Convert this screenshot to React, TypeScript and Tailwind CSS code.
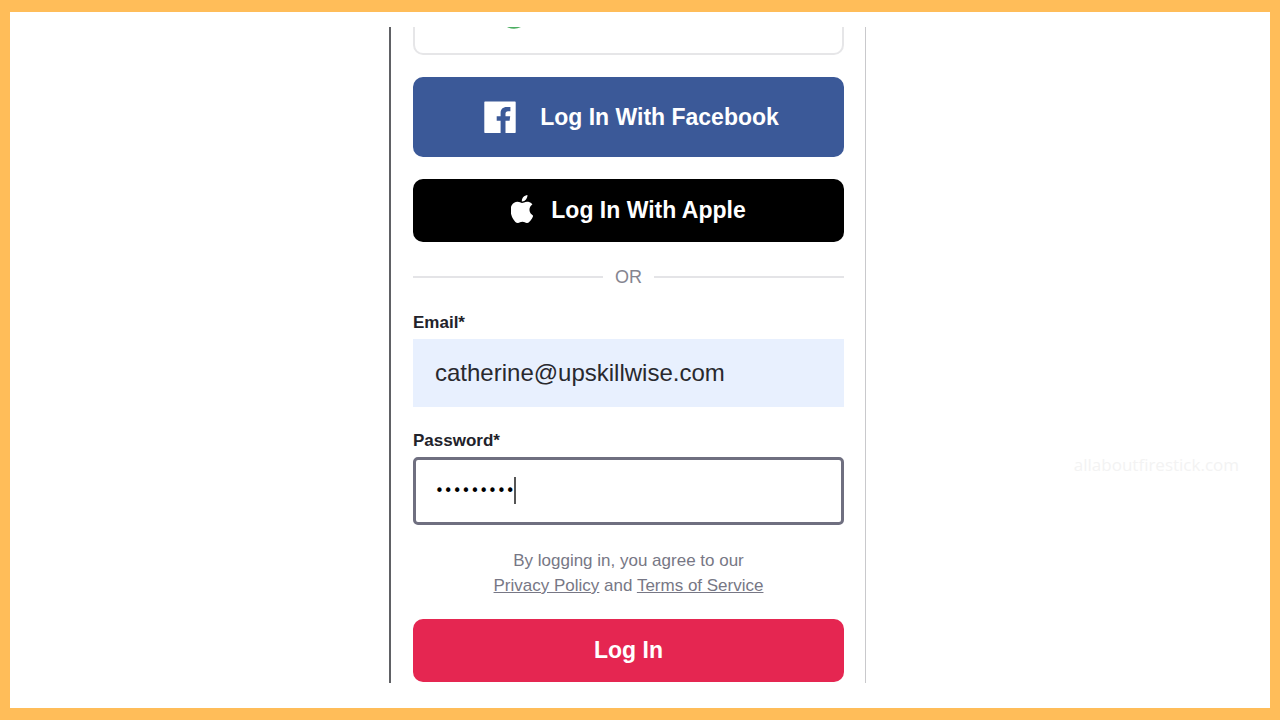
import { useState } from "react";

function FacebookMark() {
  return (
    <svg viewBox="0 0 32 32" className="size-8 shrink-0" aria-hidden="true">
      <path
        fill="#fff"
        d="M1 .5h30a.7.7 0 0 1 .7.7v30a.7.7 0 0 1-.7.7h-9.500V19.700h4.100l.6-4.400h-4.700v-2.700c0-1.500.8-2.400 2.500-2.400h2.400V6h-3.700c-3.900 0-6.100 2.300-6.100 5.900v3.400h-3.900v4.400h3.900v12.200H1a.7.7 0 0 1-.7-.7v-30A.7.7 0 0 1 1 .5z"
      />
    </svg>
  );
}

function AppleMark() {
  return (
    <svg viewBox="2.600 0 19 24" className="mb-1 h-7 w-[22px] shrink-0" aria-hidden="true" preserveAspectRatio="none">
      <path
        fill="#fff"
        d="M12.152 6.896c-.948 0-2.415-1.078-3.960-1.040-2.040.027-3.910 1.183-4.961 3.014-2.117 3.675-.546 9.103 1.519 12.090 1.013 1.454 2.208 3.090 3.792 3.039 1.520-.065 2.090-.987 3.935-.987 1.831 0 2.350.987 3.960.948 1.637-.026 2.676-1.480 3.676-2.948 1.156-1.688 1.636-3.325 1.662-3.415-.039-.013-3.182-1.221-3.220-4.857-.026-3.040 2.480-4.494 2.597-4.559-1.429-2.090-3.623-2.324-4.390-2.376-2-.156-3.675 1.090-4.610 1.090zM15.530 3.830c.843-1.012 1.400-2.427 1.245-3.830-1.207.052-2.662.805-3.532 1.818-.780.896-1.454 2.338-1.273 3.714 1.338.104 2.715-.688 3.559-1.701"
      />
    </svg>
  );
}

export default function App() {
  const [email, setEmail] = useState("catherine@upskillwise.com");
  const [password, setPassword] = useState("skillwise");

  return (
    <div className="relative flex min-h-screen items-start justify-center border-x-[10px] border-y-[12px] border-[#ffbd59] bg-white pt-[15px] pr-[25px] font-['Liberation_Sans',Arial,sans-serif]">
      <main className="w-full max-w-[477px] border-r border-l-2 border-l-[#606165] border-r-[#c9c9cc] pr-[21px] pb-px pl-[22px]">
        <form onSubmit={(e) => e.preventDefault()} className="flex flex-col">
          <button
            type="button"
            aria-label="Log In With Google"
            className="flex h-7 w-full items-start rounded-b-[10px] border-2 border-t-0 border-[#e6e6e8] pl-[91px]"
          >
            <svg viewBox="0 0 16 3" className="h-[3px] w-4" aria-hidden="true">
              <path d="M1 0h14Q8 3.600 1 0z" fill="#4cae62" />
            </svg>
          </button>

          <button
            type="button"
            className="mt-[22px] flex h-20 items-center justify-center gap-6 rounded-[10px] bg-[#3b5998] pl-[6px] text-[23px] font-bold text-white"
          >
            <FacebookMark />
            Log In With Facebook
          </button>

          <button
            type="button"
            className="mt-[22px] flex h-[63px] items-center justify-center gap-[18px] rounded-[10px] bg-black text-[23px] font-bold text-white"
          >
            <AppleMark />
            Log In With Apple
          </button>

          <div className="mt-[23px] flex h-6 items-center gap-3 text-lg leading-6 text-[#85858f]">
            <span className="h-0.5 flex-1 bg-[#e4e4e7]" />
            OR
            <span className="h-0.5 flex-1 bg-[#e4e4e7]" />
          </div>

          <label htmlFor="email" className="mt-[22px] text-[17px] leading-6 font-bold text-[#22222a]">
            Email*
          </label>
          <input
            id="email"
            type="email"
            value={email}
            onChange={(e) => setEmail(e.target.value)}
            className="mt-1 h-[68px] w-full bg-[#e8f0fe] px-[22px] text-2xl text-[#29292e] outline-none"
          />

          <label htmlFor="password" className="mt-[22px] text-[17px] leading-6 font-bold text-[#22222a]">
            Password*
          </label>
          <div className="relative mt-1">
            <input
              id="password"
              type="password"
              value={password}
              onChange={(e) => setPassword(e.target.value)}
              className="block h-[68px] w-full rounded-[5px] border-[3px] border-[#6f6f80] bg-white px-[19px] font-['DejaVu_Sans',sans-serif] text-[15px] text-black caret-transparent outline-none"
            />
            <span className="absolute top-5 left-[101px] h-[27px] w-0.5 bg-[#555]" aria-hidden="true" />
          </div>

          <p className="mt-[23px] text-center text-[17px] leading-[25px] text-[#777785]">
            By logging in, you agree to our
            <br />
            <a href="#privacy" className="underline">
              Privacy Policy
            </a>{" "}
            and{" "}
            <a href="#terms" className="underline">
              Terms of Service
            </a>
          </p>

          <button
            type="submit"
            className="mt-[21px] h-[63px] rounded-[10px] bg-[#e52651] text-[23px] font-bold text-white"
          >
            Log In
          </button>
        </form>
      </main>

      <span className="absolute top-[441px] right-[31px] font-['Open_Sans',sans-serif] text-[17px] leading-6 text-[#f3f3f3]">
        allaboutfirestick.com
      </span>
    </div>
  );
}
